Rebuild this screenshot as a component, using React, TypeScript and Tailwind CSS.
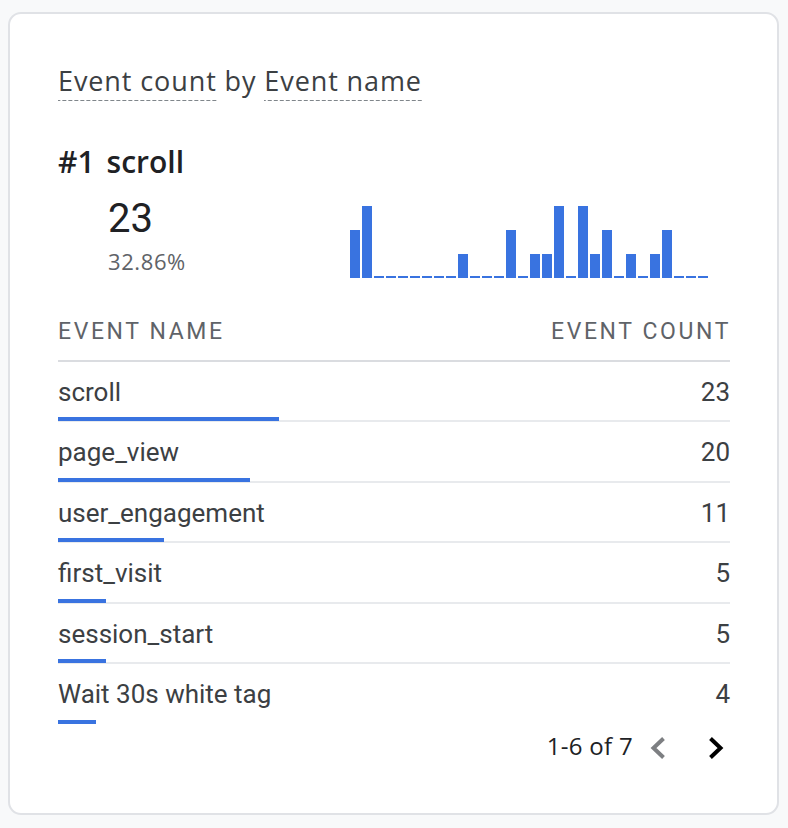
import React from 'react';

interface EventRow {
  name: string;
  count: number;
}

const rows: EventRow[] = [
  { name: 'scroll', count: 23 },
  { name: 'page_view', count: 20 },
  { name: 'user_engagement', count: 11 },
  { name: 'first_visit', count: 5 },
  { name: 'session_start', count: 5 },
  { name: 'Wait 30s white tag', count: 4 },
];

// per-interval counts for the top event (sparkline)
const trend = [2, 3, 0, 0, 0, 0, 0, 0, 0, 1, 0, 0, 0, 2, 0, 1, 1, 3, 0, 3, 1, 2, 0, 1, 0, 1, 2, 0, 0, 0];

const dashed =
  'inline-block pb-[4px] bg-[linear-gradient(to_right,#80868b_66%,transparent_0)] bg-[length:6px_1px] bg-repeat-x bg-bottom';

const Sparkline: React.FC<{ data: number[] }> = ({ data }) => (
  <div className="flex items-end gap-[2px] h-[72px] mt-[25.5px]">
    {data.map((v, i) => (
      <div
        key={i}
        className="w-[10px] bg-[#3973e0]"
        style={{ height: v === 0 ? 2 : v * 24 }}
      />
    ))}
  </div>
);

export default function App() {
  return (
    <div className="w-[788px] h-[828px] bg-[#f8f9fa] pt-[12px] pl-[8px]">
      <div className="w-[771px] h-[803px] bg-white border-2 border-[#e0e2e6] rounded-[13px] pl-[48px] pr-[47px] pt-[51px] font-['Roboto',sans-serif]">
        {/* Title */}
        <div className="font-['Open_Sans',sans-serif] font-medium text-[27px] leading-[32px] tracking-[0.9px] text-[#3c4043] whitespace-nowrap">
          <span className={dashed}>Event count</span> by <span className={dashed}>Event name</span>
        </div>

        {/* Top item */}
        <div className="mt-[43px] font-['Open_Sans',sans-serif] text-[30px] leading-[36px] font-semibold text-[#202124] whitespace-nowrap">
          <span>#1</span>
          <span className="ml-[12px]">scroll</span>
        </div>
        <div className="flex">
          <div className="ml-[50px] w-[242px]">
            <div className="mt-[14.5px] text-[40px] leading-[48px] text-[#202124]">23</div>
            <div className="mt-[4px] font-['Open_Sans',sans-serif] text-[22px] leading-[28px] tracking-[0.6px] text-[#5f6368]">
              32.86%
            </div>
          </div>
          <Sparkline data={trend} />
        </div>

        {/* Table */}
        <div className="mt-[42.5px] flex justify-between pb-[15.5px] border-b-2 border-[#dadce0] text-[23px] leading-[24px] tracking-[2.6px] text-[#5f6368] uppercase">
          <span>Event name</span>
          <span className="-mr-[1px]">Event count</span>
        </div>
        {rows.map((row, i) => (
          <div
            key={row.name}
            className={`flex flex-col pt-[15px] ${i < rows.length - 1 ? 'border-b-2 border-[#e8eaed]' : ''}`}
          >
            <div className="flex justify-between text-[26px] leading-[30px] text-[#3c4043]">
              <span>{row.name}</span>
              <span>{row.count}</span>
            </div>
            <div
              className="mt-[10.5px] h-[4px] -mb-[1px] bg-[#3973e0]"
              style={{ width: row.count * 9.6 }}
            />
          </div>
        ))}

        {/* Pagination */}
        <div className="mt-[7.5px] flex items-center justify-end font-['Open_Sans',sans-serif] text-[24px] leading-[32px] tracking-[0.3px] text-[#202124]">
          <span>1-6 of 7</span>
          <svg className="ml-[16px] mt-[4px]" width="18" height="24" viewBox="0 0 18 24">
            <polyline points="14.5,2.5 4.5,12 14.5,21.5" fill="none" stroke="#7d7f82" strokeWidth="4" />
          </svg>
          <svg className="ml-[40px] mr-[5px] mt-[4px]" width="18" height="24" viewBox="0 0 18 24">
            <polyline points="3.5,2.5 13.5,12 3.5,21.5" fill="none" stroke="#000000" strokeWidth="4" />
          </svg>
        </div>
      </div>
    </div>
  );
}
